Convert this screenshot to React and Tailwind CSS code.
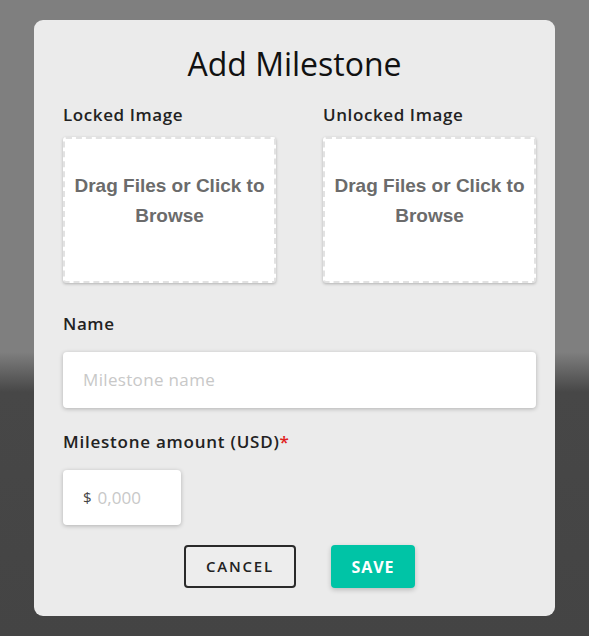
import React from 'react';

const ui = { fontFamily: '"Open Sans", "Noto Sans", sans-serif' };
const arial = { fontFamily: '"Liberation Sans", Arial, sans-serif' };

const DropZone = ({ label }) => (
  <div className="flex flex-col">
    <label className="text-[17px] font-semibold tracking-[0.035em] text-[#222] leading-5 mb-[12px]">{label}</label>
    <div
      className="h-[146px] bg-white rounded-[3px] border-2 border-dashed border-[#e2e2e2] shadow-[0_1px_3px_rgba(0,0,0,0.25)] flex items-center justify-center text-center px-2"
      style={arial}
    >
      <span className="text-[19px] font-bold text-[#6b6b6b] leading-[30px] -mt-[18px]">
        Drag Files or Click to Browse
      </span>
    </div>
  </div>
);

export default function App() {
  return (
    <div
      className="w-[589px] h-[636px] overflow-hidden bg-[linear-gradient(to_bottom,#7f7f7f_0px,#7f7f7f_352px,#474747_392px,#444444_636px)] pt-[20px] pl-[34px]"
      style={ui}
    >
      <div className="w-[521px] h-[596px] bg-[#ebebeb] rounded-[9px] pt-[28px] pl-[29px] pr-[19px]">
        <h2 className="text-center text-[32px] font-medium leading-none text-[#111] -ml-[10px] mb-[25px]">Add Milestone</h2>

        <div className="grid grid-cols-2 gap-[47px]">
          <DropZone label="Locked Image" />
          <DropZone label="Unlocked Image" />
        </div>

        <label className="block mt-[31px] text-[17px] font-semibold tracking-[0.035em] text-[#222] leading-5">Name</label>
        <div className="mt-[18px] h-[56px] bg-white rounded-[4px] shadow-[0_1px_4px_rgba(0,0,0,0.25)] flex items-center px-[20px]">
          <span className="text-[17px] tracking-[0.02em] text-[#c8c8c8]">Milestone name</span>
        </div>

        <label className="block mt-[24px] text-[17px] font-semibold tracking-[0.045em] text-[#222] leading-5">
          Milestone amount (USD)<span className="text-[#e02020]">*</span>
        </label>
        <div className="mt-[18px] w-[118px] h-[55px] bg-white rounded-[4px] shadow-[0_1px_4px_rgba(0,0,0,0.25)] flex items-center pl-[20px]">
          <span className="text-[15px] text-[#444] mr-[6px]">$</span>
          <span className="text-[17px] text-[#c8c8c8]">0,000</span>
        </div>

        <div className="mt-[20px] flex justify-center gap-[35px]">
          <button className="w-[112px] h-[43px] border-2 border-[#2a2a2a] rounded-[4px] bg-[#ededed] text-[15px] font-semibold tracking-[0.12em] text-[#222]">
            CANCEL
          </button>
          <button className="w-[84px] h-[43px] rounded-[4px] bg-[#00c4a6] text-white text-[16px] font-bold tracking-[0.06em] shadow-[0_2px_5px_rgba(0,0,0,0.2)]">
            SAVE
          </button>
        </div>
      </div>
    </div>
  );
}
